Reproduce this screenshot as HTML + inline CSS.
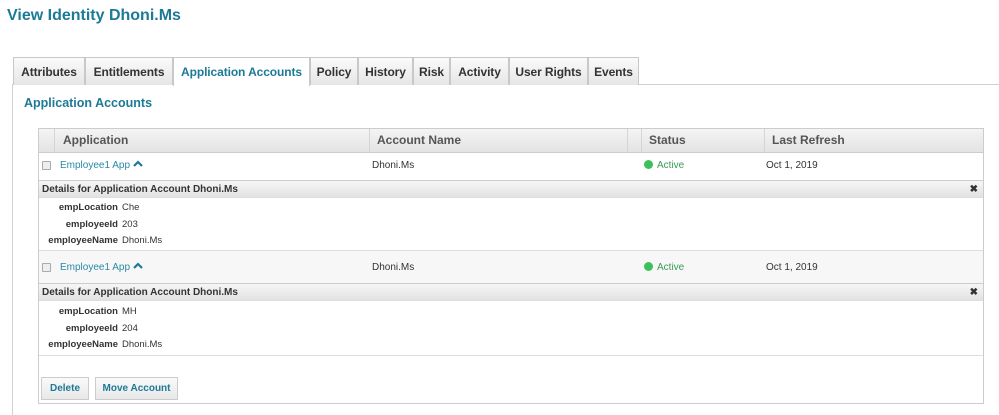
<!DOCTYPE html>
<html><head><style>
*{box-sizing:border-box;margin:0;padding:0}
html,body{width:999px;height:415px;overflow:hidden}
body{background:#fff;font-family:"Liberation Sans",sans-serif;position:relative;color:#333}
.a{position:absolute}
h1{position:absolute;left:7px;top:7px;font-size:16px;font-weight:bold;color:#1d7a96}
.tab{position:absolute;top:57px;height:28px;border:1px solid #c8c8c8;border-bottom:none;background:linear-gradient(#fafafa,#e6e6e6);font-size:12px;font-weight:bold;color:#333;text-align:center;line-height:28px;letter-spacing:-0.1px}
.tab.on{background:#fff;color:#1d7a96;height:29px}
.panel{position:absolute;left:12px;top:84px;width:990px;height:340px;border:1px solid #d0d0d0;border-bottom:none}
.sub{left:24px;top:96px;font-size:12.5px;font-weight:bold;color:#1d7a96}
.tbl{position:absolute;left:38px;top:128px;width:946px;height:276px;border:1px solid #ccc}
.hdr{position:absolute;left:0;top:0;width:944px;height:24px;background:linear-gradient(#f4f4f4,#e3e3e3);border-bottom:1px solid #ccc;font-size:12px;font-weight:bold;color:#555}
.hdr div{position:absolute;top:0;height:23px;line-height:23px;border-left:1px solid #d4d4d4;padding-left:7px}
.row{position:absolute;left:0;width:944px;font-size:10px;line-height:12px}
.cb{position:absolute;left:3px;width:9px;height:9px;border:1px solid #aaa;background:#eee;border-radius:1px}
.lnk{color:#2a8aa8}
.det{position:absolute;left:0;width:944px;height:18px;background:linear-gradient(#f6f6f6,#e2e2e2);border-top:1px solid #ccc;border-bottom:1px solid #ddd;font-size:10px;font-weight:bold;line-height:17px;padding-left:3px;color:#333}
.x{position:absolute;right:5px;top:0;font-size:10px}
.kv{position:absolute;font-size:9.5px;line-height:16.5px}
.kv b{display:inline-block;width:79px;text-align:right;margin-right:4px}
.dot{display:inline-block;width:9px;height:9px;border-radius:50%;background:#3cc05a;margin-right:4px;vertical-align:-1px}
.btn{position:absolute;top:248px;height:23px;border:1px solid #ccc;background:linear-gradient(#fafafa,#e8e8e8);font-size:10px;font-weight:bold;color:#1d7a96;line-height:21px;text-align:center}
.chev{display:inline-block;vertical-align:1px;margin-left:3px}
</style></head><body>
<h1>View Identity Dhoni.Ms</h1>
<div class="panel"></div>
<div class="tab" style="left:13px;width:72px">Attributes</div>
<div class="tab" style="left:85px;width:88px">Entitlements</div>
<div class="tab on" style="left:173px;width:137px">Application Accounts</div>
<div class="tab" style="left:310px;width:48px">Policy</div>
<div class="tab" style="left:358px;width:55px">History</div>
<div class="tab" style="left:413px;width:37px">Risk</div>
<div class="tab" style="left:450px;width:59px">Activity</div>
<div class="tab" style="left:509px;width:79px">User Rights</div>
<div class="tab" style="left:588px;width:51px">Events</div>
<div class="a sub">Application Accounts</div>
<div class="tbl">
 <div class="hdr">
  <div style="left:15px;width:316px;padding-left:8px">Application</div>
  <div style="left:330px;width:258px">Account Name</div>
  <div style="left:588px;width:14px"></div>
  <div style="left:602px;width:123px">Status</div>
  <div style="left:725px;width:219px">Last Refresh</div>
 </div>
 <div class="row" style="top:24px;height:28px">
  <div class="cb" style="top:8px"></div>
  <span class="a lnk" style="left:21px;top:7px">Employee1 App<svg class="chev" width="10" height="7" viewBox="0 0 10 7"><path d="M1 6L5 2L9 6" stroke="#1d7a96" stroke-width="2.2" fill="none"/></svg></span>
  <span class="a" style="left:333px;top:7px">Dhoni.Ms</span>
  <span class="a lnk" style="left:605px;top:7px;color:#3a9a5a"><span class="dot"></span>Active</span>
  <span class="a" style="left:727px;top:7px">Oct 1, 2019</span>
 </div>
 <div class="det" style="top:51px">Details for Application Account Dhoni.Ms<span class="x">✖</span></div>
 <div class="kv" style="left:0;top:71px"><b>empLocation</b>Che<br><b>employeeId</b>203<br><b>employeeName</b>Dhoni.Ms</div>
 <div class="row" style="top:121px;height:33px;background:#f7f7f7;border-top:1px solid #ddd">
  <div class="cb" style="top:12px"></div>
  <span class="a lnk" style="left:21px;top:11px">Employee1 App<svg class="chev" width="10" height="7" viewBox="0 0 10 7"><path d="M1 6L5 2L9 6" stroke="#1d7a96" stroke-width="2.2" fill="none"/></svg></span>
  <span class="a" style="left:333px;top:11px">Dhoni.Ms</span>
  <span class="a" style="left:605px;top:11px;color:#3a9a5a"><span class="dot"></span>Active</span>
  <span class="a" style="left:727px;top:11px">Oct 1, 2019</span>
 </div>
 <div class="det" style="top:154px">Details for Application Account Dhoni.Ms<span class="x">✖</span></div>
 <div class="kv" style="left:0;top:175px"><b>empLocation</b>MH<br><b>employeeId</b>204<br><b>employeeName</b>Dhoni.Ms</div>
 <div class="a" style="left:0;top:226px;width:944px;border-top:1px solid #ddd"></div>
 <div class="btn" style="left:2px;width:48px">Delete</div>
 <div class="btn" style="left:56px;width:83px">Move Account</div>
</div>
</body></html>
